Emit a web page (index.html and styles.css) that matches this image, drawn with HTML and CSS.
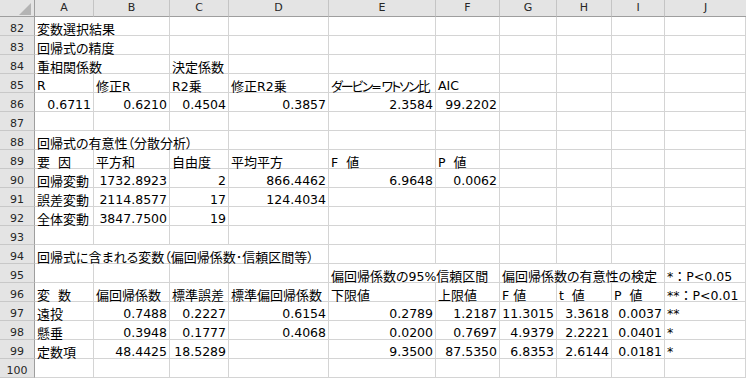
FILE: index.html
```html
<!DOCTYPE html>
<html lang="ja">
<head>
<meta charset="utf-8">
<title>変数選択結果</title>
<link rel="stylesheet" href="styles.css">
</head>
<body>
<div class="sheet">
  <div class="h corner"><svg class="tri" width="12" height="12" viewBox="0 0 12 12"><polygon points="12,0 12,12 0,12" fill="#b4b4b4"/></svg></div>
  <div class="h">A</div><div class="h">B</div><div class="h">C</div><div class="h">D</div><div class="h">E</div><div class="h">F</div><div class="h">G</div><div class="h">H</div><div class="h">I</div><div class="h last">J</div>

  <div class="r">82</div>
  <div class="c s2"><span class="j">変数選択結果</span></div><div class="c"></div><div class="c"></div><div class="c"></div><div class="c"></div><div class="c"></div><div class="c"></div><div class="c"></div><div class="c"></div>

  <div class="r">83</div>
  <div class="c s2"><span class="j">回帰式の精度</span></div><div class="c"></div><div class="c"></div><div class="c"></div><div class="c"></div><div class="c"></div><div class="c"></div><div class="c"></div><div class="c"></div>

  <div class="r">84</div>
  <div class="c s2"><span class="j">重相関係数</span></div><div class="c"><span class="j">決定係数</span></div><div class="c"></div><div class="c"></div><div class="c"></div><div class="c"></div><div class="c"></div><div class="c"></div><div class="c"></div>

  <div class="r">85</div>
  <div class="c">R</div><div class="c"><span class="j">修正</span>R</div><div class="c">R2<span class="j">乗</span></div><div class="c"><span class="j">修正</span>R2<span class="j">乗</span></div><div class="c"><span class="j kana">ダービン</span>=<span class="j kana">ワトソン</span><span class="j">比</span></div><div class="c">AIC</div><div class="c"></div><div class="c"></div><div class="c"></div><div class="c"></div>

  <div class="r">86</div>
  <div class="c n">0.6711</div><div class="c n">0.6210</div><div class="c n">0.4504</div><div class="c n">0.3857</div><div class="c n">2.3584</div><div class="c n">99.2202</div><div class="c"></div><div class="c"></div><div class="c"></div><div class="c"></div>

  <div class="r">87</div>
  <div class="c"></div><div class="c"></div><div class="c"></div><div class="c"></div><div class="c"></div><div class="c"></div><div class="c"></div><div class="c"></div><div class="c"></div><div class="c"></div>

  <div class="r">88</div>
  <div class="c s3"><span class="j">回帰式の有意性（分散分析）</span></div><div class="c"></div><div class="c"></div><div class="c"></div><div class="c"></div><div class="c"></div><div class="c"></div><div class="c"></div>

  <div class="r">89</div>
  <div class="c"><span class="j">要</span>&nbsp;&nbsp;<span class="j">因</span></div><div class="c"><span class="j">平方和</span></div><div class="c"><span class="j">自由度</span></div><div class="c"><span class="j">平均平方</span></div><div class="c">F&nbsp;&nbsp;<span class="j">値</span></div><div class="c">P&nbsp;&nbsp;<span class="j">値</span></div><div class="c"></div><div class="c"></div><div class="c"></div><div class="c"></div>

  <div class="r">90</div>
  <div class="c"><span class="j">回帰変動</span></div><div class="c n">1732.8923</div><div class="c n">2</div><div class="c n">866.4462</div><div class="c n">6.9648</div><div class="c n">0.0062</div><div class="c"></div><div class="c"></div><div class="c"></div><div class="c"></div>

  <div class="r">91</div>
  <div class="c"><span class="j">誤差変動</span></div><div class="c n">2114.8577</div><div class="c n">17</div><div class="c n">124.4034</div><div class="c"></div><div class="c"></div><div class="c"></div><div class="c"></div><div class="c"></div><div class="c"></div>

  <div class="r">92</div>
  <div class="c"><span class="j">全体変動</span></div><div class="c n">3847.7500</div><div class="c n">19</div><div class="c"></div><div class="c"></div><div class="c"></div><div class="c"></div><div class="c"></div><div class="c"></div><div class="c"></div>

  <div class="r">93</div>
  <div class="c"></div><div class="c"></div><div class="c"></div><div class="c"></div><div class="c"></div><div class="c"></div><div class="c"></div><div class="c"></div><div class="c"></div><div class="c"></div>

  <div class="r">94</div>
  <div class="c s4"><span class="j">回帰式に含まれる変数（偏回帰係数･信頼区間等）</span></div><div class="c"></div><div class="c"></div><div class="c"></div><div class="c"></div><div class="c"></div><div class="c"></div>

  <div class="r">95</div>
  <div class="c"></div><div class="c"></div><div class="c"></div><div class="c"></div><div class="c s2"><span class="j">偏回帰係数の</span>95%<span class="j">信頼区間</span></div><div class="c s3"><span class="j">偏回帰係数の有意性の検定</span></div><div class="c">*<span class="jw">：</span>P&lt;0.05</div>

  <div class="r">96</div>
  <div class="c"><span class="j">変</span>&nbsp;&nbsp;<span class="j">数</span></div><div class="c"><span class="j">偏回帰係数</span></div><div class="c"><span class="j">標準誤差</span></div><div class="c"><span class="j">標準偏回帰係数</span></div><div class="c"><span class="j">下限値</span></div><div class="c"><span class="j">上限値</span></div><div class="c">F&nbsp;<span class="j">値</span></div><div class="c">t&nbsp;&nbsp;<span class="j">値</span></div><div class="c">P&nbsp;&nbsp;<span class="j">値</span></div><div class="c">**<span class="jw">：</span>P&lt;0.01</div>

  <div class="r">97</div>
  <div class="c"><span class="j">遠投</span></div><div class="c n">0.7488</div><div class="c n">0.2227</div><div class="c n">0.6154</div><div class="c n">0.2789</div><div class="c n">1.2187</div><div class="c n">11.3015</div><div class="c n">3.3618</div><div class="c n">0.0037</div><div class="c">**</div>

  <div class="r">98</div>
  <div class="c"><span class="j">懸垂</span></div><div class="c n">0.3948</div><div class="c n">0.1777</div><div class="c n">0.4068</div><div class="c n">0.0200</div><div class="c n">0.7697</div><div class="c n">4.9379</div><div class="c n">2.2221</div><div class="c n">0.0401</div><div class="c">*</div>

  <div class="r">99</div>
  <div class="c"><span class="j">定数項</span></div><div class="c n">48.4425</div><div class="c n">18.5289</div><div class="c"></div><div class="c n">9.3500</div><div class="c n">87.5350</div><div class="c n">6.8353</div><div class="c n">2.6144</div><div class="c n">0.0181</div><div class="c">*</div>

  <div class="r">100</div>
  <div class="c"></div><div class="c"></div><div class="c"></div><div class="c"></div><div class="c"></div><div class="c"></div><div class="c"></div><div class="c"></div><div class="c"></div><div class="c"></div>
</div>
</body>
</html>
```

FILE: styles.css
```css
html, body {
  margin: 0;
  padding: 0;
  background: #ffffff;
}

.sheet {
  width: 746px;
  height: 379px;
  overflow: hidden;
  display: grid;
  grid-template-columns: 35px 59px 76px 59px 100px 107px 64px 57px 55px 53px 1fr;
  grid-template-rows: 17px;
  grid-auto-rows: 19px;
  font-family: "DejaVu Sans", "Noto Sans CJK JP", sans-serif;
  font-size: 12.5px;
  color: #000000;
}

.h {
  box-sizing: border-box;
  background: #e4e4e4;
  border-right: 1px solid #c4c4c4;
  border-bottom: 1px solid #9e9e9e;
  font-size: 11px;
  line-height: 16px;
  text-align: center;
  color: #262626;
}

.h.last {
  border-right: none;
}

.corner {
  position: relative;
  border-right: 1px solid #9e9e9e;
}

.tri {
  position: absolute;
  right: 3px;
  bottom: 1px;
}

.r {
  box-sizing: border-box;
  background: #e4e4e4;
  border-right: 1px solid #9e9e9e;
  border-bottom: 1px solid #c8c8c8;
  font-size: 11px;
  line-height: 13px;
  padding-top: 5px;
  text-align: center;
  color: #262626;
}

.c {
  box-sizing: border-box;
  border-right: 1px solid #d4d4d4;
  border-bottom: 1px solid #d4d4d4;
  padding: 5px 2px 0 2px;
  line-height: 13px;
  white-space: nowrap;
}

.n {
  text-align: right;
}

.s2 { grid-column: span 2; }
.s3 { grid-column: span 3; }
.s4 { grid-column: span 4; }

.j {
  font-family: "Noto Sans CJK JP", sans-serif;
  font-size: 13px;
  font-feature-settings: "palt";
}

.kana {
  letter-spacing: -2px;
}

.jw {
  font-family: "Noto Sans CJK JP", sans-serif;
  font-size: 13px;
}
```
